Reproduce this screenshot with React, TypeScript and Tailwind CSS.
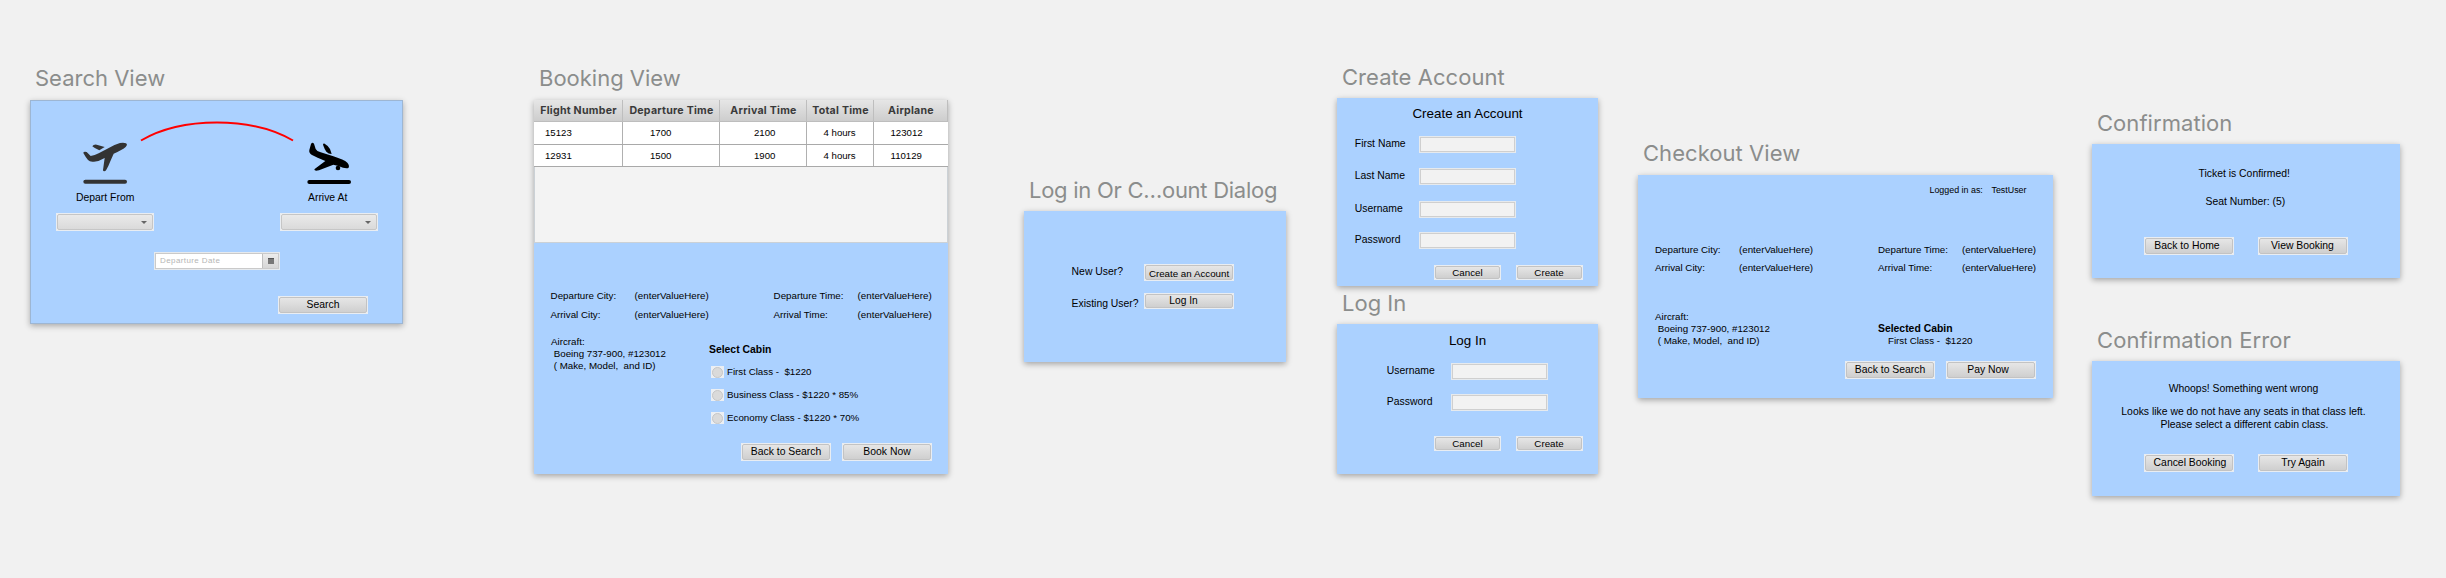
import type { ReactNode } from "react";
import clsx from "clsx";

function Artboard({
  title,
  place,
  tracking = "tracking-normal",
  panel,
  outlined = false,
  children,
}: {
  title: string;
  place: string;
  tracking?: string;
  panel: string;
  outlined?: boolean;
  children: ReactNode;
}) {
  return (
    <section className={clsx("absolute", place)}>
      <h2
        className={clsx(
          "ml-[5px] whitespace-nowrap font-['Inter',sans-serif] text-[22px] leading-[26px] text-[#8b8d8c]",
          tracking,
        )}
      >
        {title}
      </h2>
      <div
        className={clsx(
          "flex flex-col bg-[#abd1ff]",
          outlined
            ? "shadow-[inset_0_0_0_1px_#9db6d3,0_2px_6px_rgba(0,0,0,0.3)]"
            : "shadow-[0_2px_6px_rgba(0,0,0,0.33)]",
          panel,
        )}
      >
        {children}
      </div>
    </section>
  );
}

function Button({
  children,
  size = "h-[18px] w-[90px] text-[10.4px]",
  label = "",
}: {
  children: ReactNode;
  size?: string;
  label?: string;
}) {
  return (
    <button className={clsx("shrink-0 border border-[#e9edf2] bg-[#f2f2f2]", size)}>
      <span className="flex h-full items-center justify-center whitespace-nowrap rounded-[2px] border border-[#c3c3c3] bg-linear-to-b from-[#e6e6e6] to-[#cfcfcf] leading-3">
        <span className={label}>{children}</span>
      </span>
    </button>
  );
}

function Select() {
  return (
    <div className="h-[18px] w-[98px] border border-[#e9edf2] bg-[#f2f2f2]">
      <div className="flex h-full items-center justify-end rounded-[2px] border border-[#c6c6c6] bg-linear-to-b from-[#eaeaea] to-[#dadada] pr-[5px]">
        <svg className="h-[3px] w-[6px]" viewBox="0 0 6 3">
          <path d="M0 0h6L3 3z" fill="#666" />
        </svg>
      </div>
    </div>
  );
}

function Field({ label, row }: { label: string; row: string }) {
  return (
    <label className={clsx("flex items-start", row)}>
      <span className="mt-[2px] w-[65px] pl-[0.8px] text-[10.4px] leading-3">{label}</span>
      <span className="h-[17px] w-[97px] border border-[#e6eaee] bg-[#f2f2f2]">
        <span className="block h-full border border-[#cfcfcf]" />
      </span>
    </label>
  );
}

function FormActions({ className }: { className: string }) {
  return (
    <div className={clsx("ml-[97px] flex gap-[15px]", className)}>
      <Button size="h-[15px] w-[67px] text-[9.75px]">Cancel</Button>
      <Button size="h-[15px] w-[67px] text-[9.75px]" label="-ml-[1px]">Create</Button>
    </div>
  );
}

function FlightDetails({ className }: { className: string }) {
  return (
    <div className={clsx("grid grid-cols-[84px_139px_84px_auto] text-[9.75px] leading-3", className)}>
      <span>Departure City:</span>
      <span>(enterValueHere)</span>
      <span>Departure Time:</span>
      <span>(enterValueHere)</span>
      <span>Arrival City:</span>
      <span>(enterValueHere)</span>
      <span>Arrival Time:</span>
      <span>(enterValueHere)</span>
    </div>
  );
}

function Aircraft({ className }: { className: string }) {
  return (
    <p className={clsx("whitespace-pre text-[9.75px] leading-3", className)}>
      {"Aircraft:\n Boeing 737-900, #123012\n ( Make, Model,  and ID)"}
    </p>
  );
}

function Takeoff() {
  return (
    <svg className="ml-[27px] h-[42px] w-[44px] overflow-visible" viewBox="189 246 132 126" fill="#333">
      <path d="M190 279q0-4 5-4l5 1 12 12q12-2 24-8l26-14q20-12 38-17 12-2 18 1 6 4-1 11-12 10-36 20l-10 23q-6 16-12 25-4 6-9 4-2-2 0-10l4-29q-16 10-32 11-12 2-18-5-8-10-14-21z" />
      <path d="M217 259q3-6 13-5l24 7-16 10q-13-5-21-12z" />
      <rect x="190" y="359" width="131" height="12" rx="6" />
    </svg>
  );
}

function Landing() {
  return (
    <svg className="ml-[27px] h-[42px] w-[44px] overflow-visible" viewBox="111 36 132 126" fill="#000">
      <path d="M118 60L123 42Q127 35 132 41L137 57Q141 65 152 67L190 79Q222 89 232 98Q240 108 235 114Q226 117 205 108L190 104L147 121Q133 125 133 118L166 93Q140 82 126 75Q116 69 118 60z" />
      <path d="M159 44Q159 40 164 41Q176 48 180 57L185 72Q175 72 169 65Q163 56 159 44z" />
      <circle cx="204" cy="114" r="7" />
      <rect x="112" y="150" width="131" height="12" rx="6" />
    </svg>
  );
}

const columns = [
  { name: "Flight Number", pad: "pl-[11px]" },
  { name: "Departure Time", pad: "pl-[27px]" },
  { name: "Arrival Time", pad: "pl-[34px]" },
  { name: "Total Time", pad: "pl-[16.5px]" },
  { name: "Airplane", pad: "pl-[16.5px]" },
];

const flights = [
  { height: "h-[23px]", cells: ["15123", "1700", "2100", "4 hours", "123012"] },
  { height: "h-[22px]", cells: ["12931", "1500", "1900", "4 hours", "110129"] },
];

const cabins = ["First Class -  $1220", "Business Class - $1220 * 85%", "Economy Class - $1220 * 70%"];

export default function App() {
  return (
    <main className="relative h-[578px] w-[2446px] overflow-hidden bg-[#f1f1f1] font-['Liberation_Sans',Arial,sans-serif] text-black">
      <Artboard title="Search View" place="left-[30px] top-[65px]" panel="mt-[9px] h-[224px] w-[373px]" outlined>
        <div className="ml-[26px] mt-[20px] flex h-[111px] items-start">
          <div className="w-[98px] pt-[22px]">
            <Takeoff />
            <p className="mb-[9px] ml-[20px] mt-[8px] text-[10.4px] leading-3">Depart From</p>
            <Select />
          </div>
          <svg className="-mx-[14px] h-[24px] w-[154px]" viewBox="0 0 154 24" fill="none">
            <path d="M1 20.5C42-3.5 112-3.5 153 20.5" stroke="#f00" strokeWidth="2" />
          </svg>
          <div className="w-[98px] pt-[22px]">
            <Landing />
            <p className="mb-[9px] ml-[28px] mt-[8px] text-[10.4px] leading-3">Arrive At</p>
            <Select />
          </div>
        </div>
        <div className="ml-[124px] mt-[21px] h-[18px] w-[126px] border border-[#e6eaee]">
          <div className="flex h-full border border-[#cacaca] bg-white">
            <span className="flex-1 whitespace-nowrap pl-[4px] pt-[1px] text-[8px] leading-3 tracking-[0.4px] text-[#b5b5b5]">
              Departure Date
            </span>
            <span className="flex w-[16px] items-center justify-center border-l border-[#c0c0c0] bg-linear-to-b from-[#ececec] to-[#d6d6d6]">
              <svg className="h-[6px] w-[6px]" viewBox="0 0 6 6">
                <path d="M0 0h6v6H0z" fill="#777" />
                <path d="M0 0h6v1H0z" fill="#555" />
              </svg>
            </span>
          </div>
        </div>
        <div className="ml-[248px] mt-[26px] flex">
          <Button>Search</Button>
        </div>
      </Artboard>

      <Artboard title="Booking View" place="left-[534px] top-[65px]" panel="mt-[9px] h-[374px] w-[414px]">
        <div className="flex h-[143px] flex-col">
          <div className="grid h-[22px] grid-cols-[89px_97px_87px_67px_74px] border-b border-[#bdbdbd] bg-linear-to-b from-[#e6e6e6] to-[#cdcdcd] font-['Inter',sans-serif] text-[10.6px] font-bold leading-3 tracking-[0.25px] text-[#3a3a3a]">
            {columns.map((c) => (
              <span key={c.name} className="flex items-center justify-center whitespace-nowrap border-r border-[#bebebe] pl-[1px]">
                {c.name}
              </span>
            ))}
          </div>
          {flights.map((f) => (
            <div
              key={f.cells[0]}
              className={clsx(
                "grid grid-cols-[89px_97px_87px_67px_74px] border-b border-[#a9a9a9] bg-white text-[9.65px] leading-3",
                f.height,
              )}
            >
              {f.cells.map((cell, i) => (
                <span
                  key={columns[i].name}
                  className={clsx("flex items-center", i < 4 && "border-r border-[#b0b0b0]", columns[i].pad)}
                >
                  {cell}
                </span>
              ))}
            </div>
          ))}
          <div className="flex-1 border border-t-0 border-[#cbd1d6] bg-[#f3f3f3]" />
        </div>
        <FlightDetails className="ml-[16.6px] mt-[47px] gap-y-[7px]" />
        <div className="ml-[17px] flex">
          <Aircraft className="mt-[15px] w-[158px]" />
          <div className="mt-[23px]">
            <h3 className="mb-[10px] text-[10.4px] font-bold leading-3">Select Cabin</h3>
            <div className="ml-[2px] flex flex-col gap-[11px]">
              {cabins.map((cabin) => (
                <label key={cabin} className="flex h-[12px] items-center gap-[3px] whitespace-pre text-[9.75px] leading-3">
                  <span className="flex h-[12px] w-[13px] items-center justify-center bg-[#eceff3]">
                    <span className="h-[11px] w-[11px] rounded-full border border-[#c6c6c6] bg-[#dadada]" />
                  </span>
                  {cabin}
                </label>
              ))}
            </div>
          </div>
        </div>
        <div className="mr-[16px] mt-[19px] flex justify-end gap-[11px]">
          <Button>Back to Search</Button>
          <Button>Book Now</Button>
        </div>
      </Artboard>

      <Artboard title="Log in Or C…ount Dialog" place="left-[1024px] top-[177px]" tracking="tracking-[-0.27px]" panel="mt-[8px] h-[151px] w-[262px]">
        <div className="ml-[47px] mt-[53px] flex">
          <span className="mt-[2px] w-[73px] pl-[0.6px] text-[10.4px] leading-3">New User?</span>
          <Button size="h-[17px] w-[90px] text-[9.75px]" label="mt-[2px]">Create an Account</Button>
        </div>
        <div className="ml-[47px] mt-[12px] flex">
          <span className="mt-[5px] w-[73px] whitespace-nowrap pl-[0.6px] text-[10.4px] leading-3">Existing User?</span>
          <Button size="h-[16px] w-[90px] text-[10.2px]" label="-ml-[11px]">Log In</Button>
        </div>
      </Artboard>

      <Artboard title="Create Account" place="left-[1337px] top-[64px]" tracking="tracking-[0.05px]" panel="mt-[8px] h-[188px] w-[261px]">
        <h3 className="mt-[8px] text-center text-[13.4px] leading-4">Create an Account</h3>
        <Field label="First Name" row="ml-[17px] mt-[14px]" />
        <Field label="Last Name" row="ml-[17px] mt-[15px]" />
        <Field label="Username" row="ml-[17px] mt-[16px]" />
        <Field label="Password" row="ml-[17px] mt-[14px]" />
        <FormActions className="mt-[16px]" />
      </Artboard>

      <Artboard title="Log In" place="left-[1337px] top-[290px]" panel="mt-[8px] h-[150px] w-[261px]">
        <h3 className="mt-[9px] text-center text-[13.4px] leading-4">Log In</h3>
        <Field label="Username" row="ml-[49px] mt-[14px]" />
        <Field label="Password" row="ml-[49px] mt-[14px]" />
        <FormActions className="mt-[25px]" />
      </Artboard>

      <Artboard title="Checkout View" place="left-[1638px] top-[140px]" tracking="tracking-[0.05px]" panel="mt-[9px] h-[223px] w-[415px]">
        <div className="ml-[291.5px] mt-[9px] flex text-[8.9px] leading-3">
          <span className="w-[62px]">Logged in as:</span>
          <span>TestUser</span>
        </div>
        <FlightDetails className="ml-[17px] mt-[48px] gap-y-[6px]" />
        <div className="ml-[17px] mt-[37px] flex items-end">
          <Aircraft className="w-[223px]" />
          <div className="leading-3">
            <h3 className="text-[10.4px] font-bold">Selected Cabin</h3>
            <p className="ml-[10px] whitespace-pre text-[9.75px]">{"First Class -  $1220"}</p>
          </div>
        </div>
        <div className="ml-[207px] mt-[14px] flex gap-[11px]">
          <Button>Back to Search</Button>
          <Button label="-ml-[6px]">Pay Now</Button>
        </div>
      </Artboard>

      <Artboard title="Confirmation" place="left-[2092px] top-[110px]" tracking="tracking-[0.05px]" panel="mt-[8px] h-[134px] w-[308px]">
        <p className="ml-[106.5px] mt-[24px] text-[10.4px] leading-3">Ticket is Confirmed!</p>
        <p className="ml-[113.5px] mt-[16px] text-[10.4px] leading-3">Seat Number: (5)</p>
        <div className="ml-[52px] mt-[29px] flex gap-[24px]">
          <Button label="-ml-[4px]">Back to Home</Button>
          <Button label="-ml-[1px]">View Booking</Button>
        </div>
      </Artboard>

      <Artboard title="Confirmation Error" place="left-[2092px] top-[327px]" tracking="tracking-[0.1px]" panel="mt-[8px] h-[135px] w-[308px]">
        <p className="mr-[5px] mt-[22px] text-center text-[10.4px] leading-3">Whoops! Something went wrong</p>
        <div className="mr-[3px] mt-[10px] text-center text-[10.4px] leading-[13px]">
          <p className="-ml-[2px]">Looks like we do not have any seats in that class left.</p>
          <p>Please select a different cabin class.</p>
        </div>
        <div className="ml-[52px] mt-[23px] flex gap-[24px]">
          <Button label="-mr-[2px]">Cancel Booking</Button>
          <Button>Try Again</Button>
        </div>
      </Artboard>
    </main>
  );
}
